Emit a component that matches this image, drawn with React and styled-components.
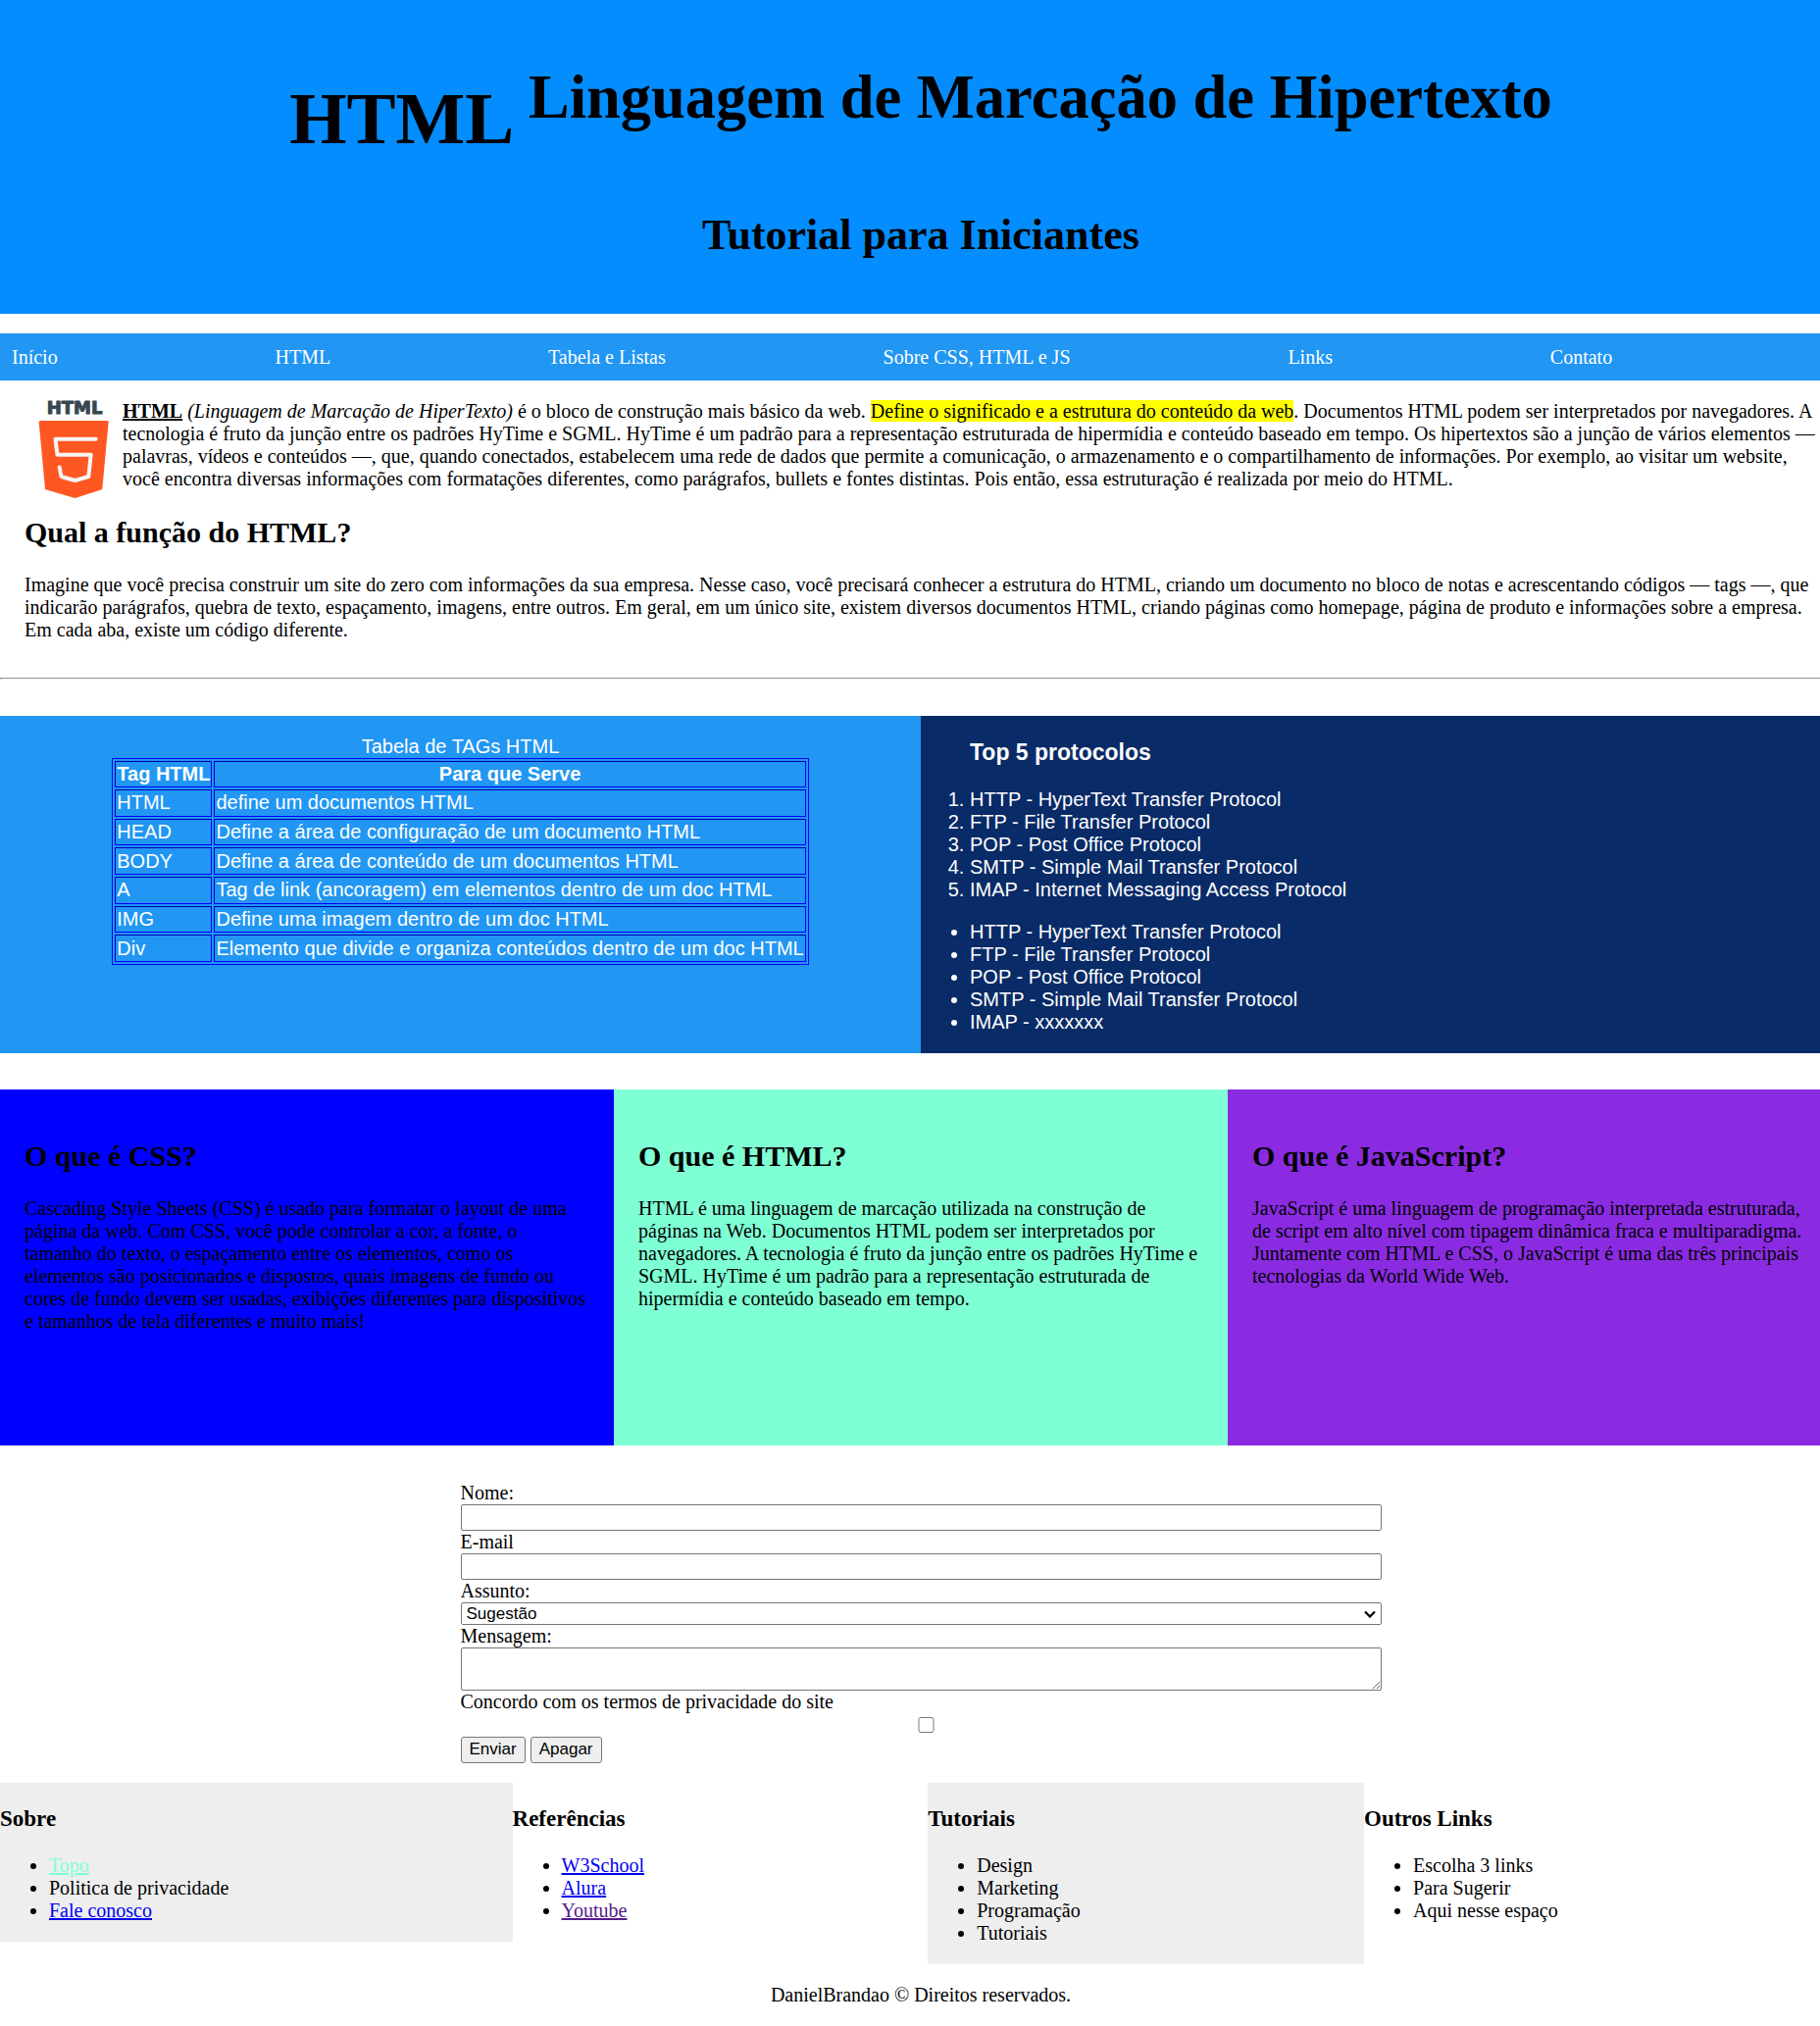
import React from "react";
import styled, { createGlobalStyle } from "styled-components";

const serif = `"Liberation Serif", "Times New Roman", serif`;
const sans = `"Liberation Sans", Arial, sans-serif`;

const GlobalStyle = createGlobalStyle`
  body {
    margin: 0;
    overflow-x: hidden;
    background: #fff;
    color: #000;
    font: 20px/23px ${serif};
  }
`;

/* The page bleeds slightly past the right edge of the window. */
const Page = styled.div`
  width: calc(100% + 22px);
`;

const Header = styled.header`
  box-sizing: border-box;
  padding: 13px 0 24px;
  background: #048dff;
  text-align: center;
`;

const Title = styled.h1`
  margin: 50px 0;
  font-size: 75px;
  line-height: normal;
`;

const TitleNote = styled.sup`
  font-size: smaller;
`;

const Subtitle = styled.h2`
  margin: 0 0 30px;
  font-size: 44px;
  line-height: 52px;
`;

const Nav = styled.nav`
  display: flex;
  margin: 20px 0;
  padding-right: 24px;
  background: #2196f3;
`;

const NavLink = styled.a`
  flex: 1 1 auto;
  padding: 13px 12px 12px;
  color: #fff;
  text-decoration: none;
`;

const Article = styled.section`
  margin: 0 25px;
`;

const Paragraph = styled.p`
  margin: 20px 0;
`;

const Logo = styled.svg`
  float: left;
  width: 100px;
  height: 100px;
  overflow: visible;
`;

const LogoText = styled.text`
  font: bold 18px "DejaVu Sans", sans-serif;
  fill: #37474f;
  stroke: #37474f;
  stroke-width: 1px;
  stroke-linejoin: round;
`;

const Mark = styled.mark`
  background: #ff0;
  color: #000;
`;

const Heading = styled.h2`
  margin: 25px 0;
  font-size: 30px;
  line-height: 35px;
`;

const Rule = styled.hr`
  margin: 37px 0;
`;

const Split = styled.section`
  display: grid;
  grid-template-columns: 1fr 1fr;
  margin-bottom: 37px;
  color: #fff;
  font-family: ${sans};
`;

const TablePanel = styled.div`
  padding: 20px;
  background: #2196f3;
`;

const TagTable = styled.table`
  height: 211px;
  margin: 0 auto;
  border: 1px solid #00f;
  border-spacing: 2px;

  th,
  td {
    padding: 1px;
    border: 1px solid #00f;
    border-top-color: #0000b2;
    border-left-color: #0000b2;
  }
`;

const ListPanel = styled.div`
  background: #092b67;
`;

const ListTitle = styled.h3`
  margin: ${(p) => (p.$indent ? "24px 0 23px" : "23px 0")};
  padding-left: ${(p) => (p.$indent ? "50px" : "0")};
  font-size: 23px;
  line-height: 27px;
`;

const listStyle = `
  margin: 20px 0;
  padding-left: 50px;
`;
const OrderedList = styled.ol`${listStyle}`;
const BulletList = styled.ul`${listStyle}`;

const Cards = styled.section`
  display: grid;
  grid-template-columns: repeat(3, 1fr);
  margin-bottom: 37px;
`;

const Card = styled.article`
  box-sizing: border-box;
  min-height: 363px;
  padding: 25px;
  background: ${(p) => p.$color};
`;

const Form = styled.form`
  width: 50%;
  margin: 0 auto 20px;
`;

const Label = styled.label`
  display: block;
`;

const control = `
  display: block;
  box-sizing: border-box;
  width: 100%;
  border: 1px solid #767676;
  border-radius: 2px;
  background: #fff;
  color: #000;
  font: 17px/20px ${sans};
`;

const TextInput = styled.input`
  ${control}
  height: 27px;
  padding: 1px 3px;
`;

const SelectBox = styled.div`
  display: grid;
  align-items: center;

  > * {
    grid-area: 1 / 1;
  }
`;

const Select = styled.select`
  ${control}
  appearance: none;
  height: 23px;
  padding: 0 5px;
`;

const Chevron = styled.svg`
  justify-self: end;
  width: 12px;
  height: 8px;
  margin-right: 6px;
  pointer-events: none;
`;

const TextArea = styled.textarea`
  ${control}
  height: 44px;
  padding: 3px;
`;

const Checkbox = styled.input`
  display: block;
  width: 100%;
  height: 16px;
  margin: 4px 0 4px 5px;
`;

const Actions = styled.div`
  display: flex;
  gap: 5px;
`;

const Button = styled.button`
  padding: 2px 8px 3px;
  border: 1px solid #767676;
  border-radius: 3px;
  background: #efefef;
  color: #000;
  font: 17px/20px ${sans};
`;

const FooterColumns = styled.div`
  display: flex;
  align-items: flex-start;
`;

const FooterColumn = styled.div`
  display: flow-root;
  flex: 1 1 auto;
  background: ${(p) => (p.$shaded ? "#eee" : "transparent")};
`;

const FooterLink = styled.a`
  color: ${(p) => p.$color || "#0000ee"};
`;

const Copyright = styled.p`
  margin: 20px 0;
  text-align: center;
`;

const navItems = [
  ["Início", "#inicio"],
  ["HTML", "#html"],
  ["Tabela e Listas", "#tabela"],
  ["Sobre CSS, HTML e JS", "#sobre"],
  ["Links", "#links"],
  ["Contato", "#contato"],
];

const tags = [
  ["HTML", "define um documentos HTML"],
  ["HEAD", "Define a área de configuração de um documento HTML"],
  ["BODY", "Define a área de conteúdo de um documentos HTML"],
  ["A", "Tag de link (ancoragem) em elementos dentro de um doc HTML"],
  ["IMG", "Define uma imagem dentro de um doc HTML"],
  ["Div", "Elemento que divide e organiza conteúdos dentro de um doc HTML"],
];

const protocols = [
  "HTTP - HyperText Transfer Protocol",
  "FTP - File Transfer Protocol",
  "POP - Post Office Protocol",
  "SMTP - Simple Mail Transfer Protocol",
];

const cards = [
  {
    title: "O que é CSS?",
    color: "#0000ff",
    text: "Cascading Style Sheets (CSS) é usado para formatar o layout de uma página da web. Com CSS, você pode controlar a cor, a fonte, o tamanho do texto, o espaçamento entre os elementos, como os elementos são posicionados e dispostos, quais imagens de fundo ou cores de fundo devem ser usadas, exibições diferentes para dispositivos e tamanhos de tela diferentes e muito mais!",
  },
  {
    title: "O que é HTML?",
    color: "#7fffd4",
    text: "HTML é uma linguagem de marcação utilizada na construção de páginas na Web. Documentos HTML podem ser interpretados por navegadores. A tecnologia é fruto da junção entre os padrões HyTime e SGML. HyTime é um padrão para a representação estruturada de hipermídia e conteúdo baseado em tempo.",
  },
  {
    title: "O que é JavaScript?",
    color: "#8a2be2",
    text: "JavaScript é uma linguagem de programação interpretada estruturada, de script em alto nível com tipagem dinâmica fraca e multiparadigma. Juntamente com HTML e CSS, o JavaScript é uma das três principais tecnologias da World Wide Web.",
  },
];

const footer = [
  {
    title: "Sobre",
    shaded: true,
    items: [
      { text: "Topo", href: "#inicio", color: "#7fffd4" },
      { text: "Politica de privacidade" },
      { text: "Fale conosco", href: "#contato" },
    ],
  },
  {
    title: "Referências",
    items: [
      { text: "W3School", href: "#w3school" },
      { text: "Alura", href: "#alura" },
      { text: "Youtube", href: "#youtube", color: "#551a8b" },
    ],
  },
  {
    title: "Tutoriais",
    shaded: true,
    items: [
      { text: "Design" },
      { text: "Marketing" },
      { text: "Programação" },
      { text: "Tutoriais" },
    ],
  },
  {
    title: "Outros Links",
    items: [
      { text: "Escolha 3 links" },
      { text: "Para Sugerir" },
      { text: "Aqui nesse espaço" },
    ],
  },
];

function HtmlLogo() {
  return (
    <Logo viewBox="0 0 100 100" role="img" aria-label="HTML5">
      <LogoText x="51" y="14" textAnchor="middle">
        HTML
      </LogoText>
      <path
        d="M16 21H84.500Q85.700 21 85.600 22.500L79.300 91L51.500 100L21 91L14.700 22.500Q14.700 21 16 21Z"
        fill="#ff5722"
      />
      <path
        d="M72.700 39.700H31.500L33.500 55.700H67.700L65.300 78L51.500 82L37.500 78L35.700 68.500"
        fill="none"
        stroke="#f5f5f5"
        strokeWidth="4"
        strokeLinecap="round"
        strokeLinejoin="round"
      />
    </Logo>
  );
}

export default function App() {
  return (
    <Page>
      <GlobalStyle />
      <Header id="inicio">
        <Title>
          HTML <TitleNote>Linguagem de Marcação de Hipertexto</TitleNote>
        </Title>
        <Subtitle>Tutorial para Iniciantes</Subtitle>
      </Header>

      <Nav>
        {navItems.map(([text, href]) => (
          <NavLink key={text} href={href}>
            {text}
          </NavLink>
        ))}
      </Nav>

      <Article id="html">
        <Paragraph>
          <HtmlLogo />
          <b>
            <u>HTML</u>
          </b>{" "}
          <i>(Linguagem de Marcação de HiperTexto)</i> é o bloco de construção
          mais básico da web.{" "}
          <Mark>Define o significado e a estrutura do conteúdo da web</Mark>.
          Documentos HTML podem ser interpretados por navegadores. A tecnologia
          é fruto da junção entre os padrões HyTime e SGML. HyTime é um padrão
          para a representação estruturada de hipermídia e conteúdo baseado em
          tempo. Os hipertextos são a junção de vários elementos — palavras,
          vídeos e conteúdos —, que, quando conectados, estabelecem uma rede de
          dados que permite a comunicação, o armazenamento e o compartilhamento
          de informações. Por exemplo, ao visitar um website, você encontra
          diversas informações com formatações diferentes, como parágrafos,
          bullets e fontes distintas. Pois então, essa estruturação é realizada
          por meio do HTML.
        </Paragraph>
        <Heading>Qual a função do HTML?</Heading>
        <Paragraph>
          Imagine que você precisa construir um site do zero com informações da
          sua empresa. Nesse caso, você precisará conhecer a estrutura do HTML,
          criando um documento no bloco de notas e acrescentando códigos — tags
          —, que indicarão parágrafos, quebra de texto, espaçamento, imagens,
          entre outros. Em geral, em um único site, existem diversos documentos
          HTML, criando páginas como homepage, página de produto e informações
          sobre a empresa. Em cada aba, existe um código diferente.
        </Paragraph>
      </Article>

      <Rule />

      <Split id="tabela">
        <TablePanel>
          <TagTable>
            <caption>Tabela de TAGs HTML</caption>
            <thead>
              <tr>
                <th scope="col">Tag HTML</th>
                <th scope="col">Para que Serve</th>
              </tr>
            </thead>
            <tbody>
              {tags.map(([tag, use]) => (
                <tr key={tag}>
                  <td>{tag}</td>
                  <td>{use}</td>
                </tr>
              ))}
            </tbody>
          </TagTable>
        </TablePanel>
        <ListPanel>
          <ListTitle $indent>Top 5 protocolos</ListTitle>
          <OrderedList>
            {protocols.map((p) => (
              <li key={p}>{p}</li>
            ))}
            <li>IMAP - Internet Messaging Access Protocol</li>
          </OrderedList>
          <BulletList>
            {protocols.map((p) => (
              <li key={p}>{p}</li>
            ))}
            <li>IMAP - xxxxxxx</li>
          </BulletList>
        </ListPanel>
      </Split>

      <Cards id="sobre">
        {cards.map((c) => (
          <Card key={c.title} $color={c.color}>
            <Heading>{c.title}</Heading>
            <Paragraph>{c.text}</Paragraph>
          </Card>
        ))}
      </Cards>

      <Form id="contato" onSubmit={(e) => e.preventDefault()}>
        <Label htmlFor="nome">Nome:</Label>
        <TextInput id="nome" type="text" />
        <Label htmlFor="email">E-mail</Label>
        <TextInput id="email" type="email" />
        <Label htmlFor="assunto">Assunto:</Label>
        <SelectBox>
          <Select id="assunto" defaultValue="sugestao">
            <option value="sugestao">Sugestão</option>
          </Select>
          <Chevron viewBox="0 0 12 8" aria-hidden="true">
            <path
              d="M1 1.500L6 6.500L11 1.500"
              fill="none"
              stroke="#000"
              strokeWidth="2.200"
            />
          </Chevron>
        </SelectBox>
        <Label htmlFor="mensagem">Mensagem:</Label>
        <TextArea id="mensagem" />
        <Label htmlFor="termos">
          Concordo com os termos de privacidade do site
        </Label>
        <Checkbox id="termos" type="checkbox" />
        <Actions>
          <Button type="submit">Enviar</Button>
          <Button type="reset">Apagar</Button>
        </Actions>
      </Form>

      <footer id="links">
        <FooterColumns>
          {footer.map((col) => (
            <FooterColumn key={col.title} $shaded={col.shaded}>
              <ListTitle>{col.title}</ListTitle>
              <BulletList>
                {col.items.map((item) => (
                  <li key={item.text}>
                    {item.href ? (
                      <FooterLink href={item.href} $color={item.color}>
                        {item.text}
                      </FooterLink>
                    ) : (
                      item.text
                    )}
                  </li>
                ))}
              </BulletList>
            </FooterColumn>
          ))}
        </FooterColumns>
        <Copyright>DanielBrandao © Direitos reservados.</Copyright>
      </footer>
    </Page>
  );
}
